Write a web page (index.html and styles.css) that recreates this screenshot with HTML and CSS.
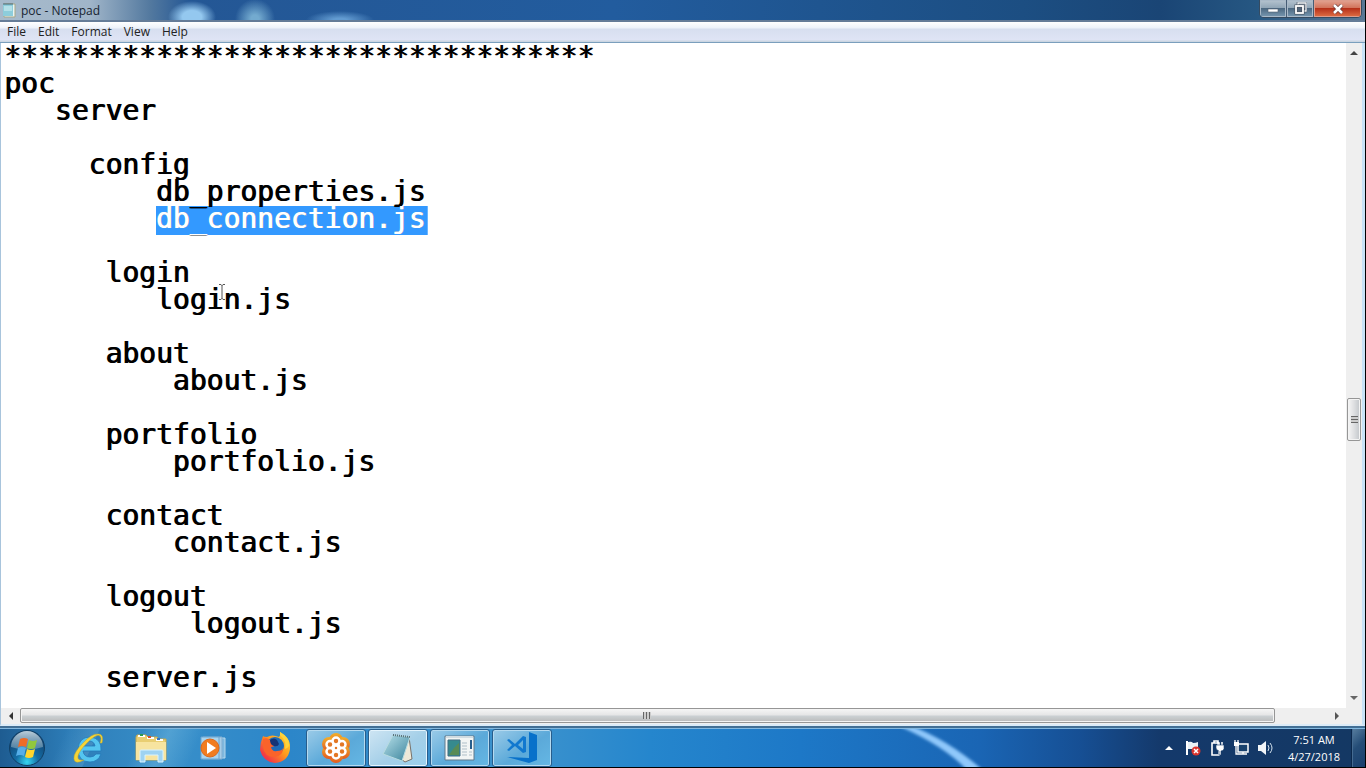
FILE: index.html
```html
<!DOCTYPE html>
<html lang="en">
<head>
<meta charset="utf-8">
<title>poc - Notepad</title>
<link rel="stylesheet" href="styles.css">
</head>
<body>
<div class="desktop">
  <main class="window">
    <header class="titlebar">
      <svg class="app-icon" width="14" height="16" viewBox="0 0 14 16" aria-hidden="true"><path d="M2 2h11v13H2z" fill="#e9f4f2" stroke="#a7a787"/><path d="M1 2h10v12H1z" fill="#8dcddb"/><path d="M2 4h8v5H2z" fill="#b4e0e8"/><path d="M2 1v2M4 1v2M6 1v2M8 1v2M10 1v2" stroke="#4c6670"/></svg>
      <h1 class="title">poc - Notepad</h1>
      <div class="controls">
        <button class="control" aria-label="Minimize"><svg width="12" height="10" viewBox="0 0 12 10"><rect x="1" y="5" width="10" height="3" fill="#fff" stroke="#536273" stroke-width=".6"/></svg></button>
        <button class="control" aria-label="Restore"><svg width="13" height="13" viewBox="0 0 13 13"><path d="M4 3V1h8v8h-2" fill="none" stroke="#4a5563" stroke-width="2.6"/><path d="M4 3V1h8v8h-2" fill="none" stroke="#f4f7fa" stroke-width="1.3"/><rect x="2" y="4" width="7" height="7" fill="#52667c" stroke="#46505d" stroke-width="3"/><rect x="2" y="4" width="7" height="7" fill="none" stroke="#fff" stroke-width="1.8"/></svg></button>
        <button class="control close" aria-label="Close"><svg width="12" height="10" viewBox="0 0 12 10"><path d="M2 1l8 8M10 1L2 9" stroke="#6b3b38" stroke-width="4"/><path d="M2 1l8 8M10 1L2 9" stroke="#fff" stroke-width="2.5"/></svg></button>
      </div>
    </header>
    <nav class="menubar" aria-label="Menu">
      <button class="menu">File</button>
      <button class="menu">Edit</button>
      <button class="menu">Format</button>
      <button class="menu">View</button>
      <button class="menu">Help</button>
    </nav>
    <section class="document">
      <textarea class="editor" id="editor" aria-label="Document text" wrap="off" spellcheck="false">***********************************
poc
   server

     config
         db_properties.js
         db_connection.js

      login
         login.js

      about
          about.js

      portfolio
          portfolio.js

      contact
          contact.js

      logout
           logout.js

      server.js</textarea>
      <div class="scroll vertical">
        <button class="arrow" aria-label="Scroll up"><svg width="8" height="4" viewBox="0 0 8 4"><path d="M0 4L4 0l4 4z" fill="#444"/></svg></button>
        <div class="track"><div class="thumb"><i class="grip"></i></div></div>
        <button class="arrow" aria-label="Scroll down"><svg width="8" height="4" viewBox="0 0 8 4"><path d="M0 0h8L4 4z" fill="#666"/></svg></button>
      </div>
      <div class="scroll horizontal">
        <button class="arrow" aria-label="Scroll left"><svg width="4" height="8" viewBox="0 0 4 8"><path d="M4 0v8L0 4z" fill="#333"/></svg></button>
        <div class="track"><div class="thumb"><i class="grip"></i></div></div>
        <button class="arrow" aria-label="Scroll right"><svg width="4" height="8" viewBox="0 0 4 8"><path d="M0 0v8l4-4z" fill="#555"/></svg></button>
      </div>
      <div class="corner"></div>
    </section>
    <svg class="pointer" width="8" height="18" viewBox="0 0 8 18" aria-hidden="true"><path d="M1 1.500h2l1 1 1-1h2M4 2v14M1 16.500h2l1-1 1 1h2" fill="none" stroke="#555"/></svg>
  </main>
  <footer class="taskbar">
    <svg class="streak" width="160" height="39" viewBox="0 0 160 39" preserveAspectRatio="none" aria-hidden="true"><defs><filter id="soft" x="-20%" y="-20%" width="140%" height="140%"><feGaussianBlur stdDeviation="1.500"/></filter></defs><path d="M8-4Q48 11 84 43H68Q45 18 0-2z" fill="#8fc8fb" filter="url(#soft)"/></svg>
    <div class="launchers">
      <button class="launcher start" aria-label="Start"><svg width="38" height="38" viewBox="0 0 38 38"><defs><radialGradient id="orb" cx=".5" cy=".9" r=".8"><stop offset="0" stop-color="#36d7f2"/><stop offset=".4" stop-color="#146da5"/><stop offset="1" stop-color="#12406d"/></radialGradient><linearGradient id="shine" x2="0" y2="1"><stop offset="0" stop-color="#d9e7ee" stop-opacity=".85"/><stop offset="1" stop-color="#86a9bd" stop-opacity=".5"/></linearGradient></defs><circle cx="19" cy="19" r="17.500" fill="url(#orb)" stroke="#103f65"/><path d="M3 18a16 16 0 0 1 32 0q-16 5-32 0z" fill="url(#shine)"/><path d="M12 10q4-2 8 0l-2 8q-4-2-8 0z" fill="#ee6b27"/><path d="M21 11q4 2 8 0l-2 8q-4 2-8 0z" fill="#91c83d"/><path d="M10 19q4-2 8 0l-2 8q-4-2-8 0z" fill="#55aee8"/><path d="M19 20q4 2 8 0l-2 8q-4 2-8 0z" fill="#ffd52d"/></svg></button>
      <button class="launcher" aria-label="Internet Explorer"><svg width="34" height="34" viewBox="0 0 34 34"><path d="M29 20H11q1 6 7 6 4 0 6-3h5q-3 8-11 8Q6 31 6 18 7 6 18 6q12 1 11 14zM11 15h12q-1-5-6-5-5 0-6 5z" fill="#54c5f0" stroke="#2479b9" stroke-width=".8"/><path d="M30 12Q32 4 27 3 20 2 11 12 1 22 2 28q1 6 10 1-7 1-6-4 1-5 9-13Q25 2 28 5q2 2 0 7z" fill="#f6d435" stroke="#b9a732" stroke-width=".5"/></svg></button>
      <button class="launcher" aria-label="Windows Explorer"><svg width="34" height="32" viewBox="0 0 34 32"><path d="M2 5l1-2h9l2 2h9l2 2h7v21H2z" fill="#e9ce72" stroke="#bfa653"/><path d="M4 4h7M13 6h7M22 8h7" stroke="#fff" stroke-width="2"/><path d="M6 3h3" stroke="#2b9b51" stroke-width="2"/><path d="M14 5h3" stroke="#d5512b" stroke-width="2"/><path d="M23 7h3" stroke="#3876c4" stroke-width="2"/><path d="M2 10h30v18H2z" fill="#f7e4a0"/><path d="M6 30V19q0-1 1-1h21q1 0 1 1v11h-5v-7H11v7z" fill="#9fd3f2" stroke="#d9f3ff"/></svg></button>
      <button class="launcher" aria-label="Windows Media Player"><svg width="28" height="28" viewBox="0 0 28 28"><path d="M7 4h19v20H7z" fill="#7eb8df" stroke="#b5d8ed"/><path d="M4 3h19v22H4z" fill="#a7cde7" stroke="#80add1"/><path d="M2 3h18v22H2z" fill="#a9d4ef" stroke="#6ba5d1"/><circle cx="11" cy="14" r="9" fill="#f17c20" stroke="#dc691d"/><path d="M8 8l9 6-9 6z" fill="#fff"/></svg></button>
      <button class="launcher" aria-label="Firefox"><svg width="34" height="34" viewBox="0 0 34 34"><defs><linearGradient id="fox" x1="1" y1="0" x2="0" y2="1"><stop offset="0" stop-color="#ffe633"/><stop offset=".45" stop-color="#ff981f"/><stop offset=".8" stop-color="#f33c43"/><stop offset="1" stop-color="#d82377"/></linearGradient></defs><path d="M5 5q-3 7-3 14 3 12 15 13 13-1 15-14 1-8-5-13-2-2-5-4 1 3-1 5-7-3-12 0-3 0-4-1z" fill="url(#fox)"/><circle cx="17" cy="15" r="9" fill="#1e6bb8"/><path d="M5 8q4-2 7 1l5 4q0 3-4 3 1 5 6 4 5 0 6-3 0 8-8 9-11 0-12-10z" fill="#fa632a"/><path d="M22 4q7 6 5 14 5-2 4-5 0-7-9-12z" fill="#ffd33b"/><path d="M12 9q4-3 7 0l2 4q-1 3-5 2-4-1-4-6z" fill="#153477"/></svg></button>
      <button class="task" aria-label="GoToMeeting"><svg width="34" height="34" viewBox="0 0 34 34"><defs><linearGradient id="flower" x2="0" y2="1"><stop offset="0" stop-color="#f2b02a"/><stop offset="1" stop-color="#e35a21"/></linearGradient></defs><g fill="url(#flower)"><circle cx="17" cy="9" r="7"/><circle cx="24" cy="13" r="7"/><circle cx="24" cy="21" r="7"/><circle cx="17" cy="25" r="7"/><circle cx="10" cy="21" r="7"/><circle cx="10" cy="13" r="7"/></g><g fill="#e37724" stroke="#fff" stroke-width="2.500"><circle cx="17" cy="10" r="3.500"/><circle cx="23" cy="13.500" r="3.500"/><circle cx="23" cy="20.500" r="3.500"/><circle cx="17" cy="24" r="3.500"/><circle cx="11" cy="20.500" r="3.500"/><circle cx="11" cy="13.500" r="3.500"/><circle cx="17" cy="17" r="2.500"/></g></svg></button>
      <button class="task active" aria-label="Notepad"><svg width="34" height="32" viewBox="0 0 34 32"><defs><linearGradient id="pad" x2="1" y2="1"><stop offset="0" stop-color="#b9e1ea"/><stop offset="1" stop-color="#38829b"/></linearGradient></defs><path d="M28 5l3 22-7 3-4-3z" fill="#eee9d8" stroke="#77716a"/><path d="M12 3l17 2-8 24-19-7z" fill="url(#pad)" stroke="#b7dbe0"/><path d="M12 3l17 2" stroke="#576e77" stroke-width="2" stroke-dasharray="1 1"/></svg></button>
      <button class="task" aria-label="Application window"><svg width="32" height="28" viewBox="0 0 32 28"><path d="M1 2h29v24H1z" fill="#f2f5f4" stroke="#61788a"/><path d="M2 3h27" stroke="#d1dce1" stroke-width="2"/><path d="M4 6h12v16H4z" fill="#368a8e" stroke="#416c83"/><path d="M5 21q6-9 10-12v12z" fill="#588b55"/><path d="M18 9h5M18 12h5M18 15h5M18 18h5M18 21h5M25 18h3M25 21h3" stroke="#afbfc8"/><path d="M26 6h2v9h-2z" fill="#275d8c"/></svg></button>
      <button class="task" aria-label="Visual Studio Code"><svg width="34" height="34" viewBox="0 0 34 34"><path d="M24 1l8 3v25l-8 3-22-6 22 1z" fill="#0871ca"/><path d="M2 9l2-1 6 5 8-8 3 1v15l-3 1-8-7-6 5-2-1 5-5zM18 9l-5 5 5 4z" fill="#1178cf" fill-rule="evenodd"/></svg></button>
    </div>
    <div class="tray">
      <button class="tray-item" aria-label="Show hidden icons"><svg width="8" height="4" viewBox="0 0 8 4"><path d="M0 4l4-4 4 4z" fill="#fff"/></svg></button>
      <button class="tray-item" aria-label="Action Center"><svg width="16" height="16" viewBox="0 0 16 16"><path d="M2 1v14" stroke="#fff" stroke-width="2"/><path d="M3 2q4-1 5 1 3 0 5-1v7q-3 2-6 0H3z" fill="#e9f1f6"/><circle cx="11" cy="11" r="4.500" fill="#da352e"/><path d="M9 9l4 4M13 9l-4 4" stroke="#fff" stroke-width="1.500"/></svg></button>
      <button class="tray-item" aria-label="Power"><svg width="16" height="16" viewBox="0 0 16 16"><path d="M3 3h7v12H3zM5 1h4v2H5z" fill="none" stroke="#fff" stroke-width="1.600"/><path d="M9 2v4M13 2v4" stroke="#fff" stroke-width="1.500"/><path d="M7 5h8v4q-1 2-3 2v4h-2v-4q-3-1-3-3z" fill="#fff" stroke="#173e6b" stroke-width=".6"/></svg></button>
      <button class="tray-item" aria-label="Network"><svg width="16" height="16" viewBox="0 0 16 16"><path d="M5 4h10v8H5z" fill="#18416d" stroke="#fff" stroke-width="1.500"/><path d="M1 2h5v4H1z" fill="#fff"/><path d="M2 0v3M5 0v3M3 6v8h11M10 12v2" stroke="#fff" fill="none" stroke-width="1.300"/></svg></button>
      <button class="tray-item" aria-label="Volume"><svg width="16" height="16" viewBox="0 0 16 16"><path d="M1 5h3l5-4v14l-5-4H1z" fill="#f1f5f8"/><path d="M11 5q2 3 0 6M13 3q4 5 0 10" fill="none" stroke="#d6e4ee"/></svg></button>
      <time class="clock" datetime="2018-04-27T07:51"><span>7:51 AM</span><span>4/27/2018</span></time>
      <button class="show-desktop" aria-label="Show desktop"></button>
    </div>
  </footer>
</div>
<script src="script.js"></script>
</body>
</html>
```
FILE: styles.css
```css
* { box-sizing: border-box; }
body { margin: 0; background: #000; font-family: "Open Sans", "Noto Sans", sans-serif; font-size: 12px; }
button { margin: 0; padding: 0; border: 0; background: none; color: inherit; font: inherit; }
svg { display: block; flex: none; }
.desktop { display: flex; flex-direction: column; height: 100vh; padding: 0 1px 1px 0; overflow: hidden; }
.window { position: relative; display: flex; flex: 1; flex-direction: column; min-height: 0; border-bottom: 2px solid #426f95; }
.titlebar {
  display: flex; align-items: center; height: 22px; padding-left: 2px;
  border-bottom: 2px solid #657c98;
  background:
    radial-gradient(ellipse 24px 16px at 192px 17px, #94c8ef 40%, transparent),
    radial-gradient(ellipse 20px 20px at 255px 19px, #73aacf 20%, transparent),
    radial-gradient(ellipse 34px 9px at 340px 20px, #629bd1 20%, transparent),
    linear-gradient(90deg, #a7bacb 0, #a0b5c9 90px, #53799f 150px, #245795 190px, #225c9e 45%, #1c4e82 75%, #1a4575 85%, #265782 92%, #5a7895);
}
.app-icon { margin-right: 5px; }
.title { flex: 1; margin: 0; padding-top: 2px; color: #172431; font-size: 12px; font-weight: 400; line-height: 20px; }
.controls { display: flex; align-self: flex-start; margin-right: 3px; overflow: hidden; border: 1px solid #354b61; border-top: 0; border-radius: 0 0 5px 5px; }
.control { display: flex; align-items: center; justify-content: center; width: 27px; height: 17px; border-right: 1px solid #465d75; background: linear-gradient(#b6c4d0, #91a6b7 45%, #4c6881 50%, #7999b2); box-shadow: inset 0 0 0 1px #a9b9c8; }
.control.close { width: 47px; border: 0; background: linear-gradient(#e3a594, #d2745d 45%, #b6311a 50%, #df7045); box-shadow: inset 0 0 0 1px #dc9c8c; }
.menubar { display: flex; height: 21px; padding-left: 1px; border-bottom: 1px solid #7a9fbd; background: linear-gradient(#fff, #edf2fa 6px, #d7dff0 7px, #dfe4f5 18px, #cbd6e2 19px); }
.menu { padding: 0 6px; color: #222; line-height: 20px; }
.document { display: grid; flex: 1; grid-template-columns: 1fr 16px; grid-template-rows: 1fr 16px; min-height: 0; border-right: 3px solid #c8e3f7; border-left: 1px solid #a8c4dc; border-bottom: 2px solid #dcebf7; background: #fff; }
.editor {
  width: 100%; height: 100%; margin: 0; padding: 0 3px; overflow: hidden; resize: none;
  border: 0; outline: 0; color: #000;
  font: 28px/27px "DejaVu Sans Mono", monospace; white-space: pre;
  text-shadow: 1px 0 #000;
  /* Highlight behind the selected name: seventh line, tenth column, sixteen characters. */
  background: linear-gradient(#3399ff, #3399ff) calc(9ch + 3px) 163px / calc(16ch + 2px) 29px no-repeat local #fff;
}
.editor::selection { background: transparent; color: #fff; text-shadow: 1px 0 #fff; }
.scroll { display: flex; background: #efefef; }
.vertical { flex-direction: column; }
.track { display: flex; flex: 1; }
.vertical .track { flex-direction: column; }
.arrow { display: flex; align-items: center; justify-content: center; }
.vertical .arrow { height: 20px; }
.horizontal .arrow { width: 19px; }
.thumb { display: flex; align-items: center; justify-content: center; border: 1px solid #969696; border-radius: 2px; box-shadow: inset 0 0 0 1px #f4f4f4; }
.vertical .thumb { height: 7%; margin: 0 1px; background: linear-gradient(90deg, #f6f6f6, #dedfe1 50%, #c2c6ca); }
.vertical .track::before { content: ""; flex: 331; }
.vertical .track::after { content: ""; flex: 244; }
.horizontal .thumb { width: 96%; height: 15px; background: linear-gradient(#f5f5f5, #e6e6e7 45%, #cbd0d3 55%, #bababa); }
.grip { width: 8px; height: 7px; }
.vertical .grip { background: repeating-linear-gradient(#666 0 1px, #ccc 1px 3px); width: 7px; }
.horizontal .grip { background: repeating-linear-gradient(90deg, #666 0 1px, #ccc 1px 3px); }
.corner { background: #efefef; }
.pointer { position: absolute; left: 218px; top: 283px; pointer-events: none; }
.taskbar {
  position: relative; display: flex; justify-content: space-between; height: 39px; overflow: hidden;
  border-top: 1px solid #83b8df; color: #fff;
  background: linear-gradient(115deg, transparent 60px, #65a4ce60 90px, transparent 91px, transparent 130px, #72b8df70 155px, transparent 185px), linear-gradient(90deg, #1e5c91, #2d7db8 70px, #388fc9 170px, #2c86c9 290px, #3d93cd 520px, #2586cd 650px, #1d78c7 800px, #1a65b4 980px, #164f94 1080px, #14396b 1160px, #143863);
}
.streak { position: absolute; left: 66%; top: 0; }
.launchers, .tray { position: relative; display: flex; align-items: center; }
.launchers { padding-left: 8px; }
.launcher { display: flex; align-items: center; justify-content: center; width: 62px; height: 38px; }
.start { justify-content: flex-start; width: 50px; }
.task { display: flex; align-items: center; justify-content: center; width: 60px; height: 38px; margin-right: 2px; border: 1px solid #275d8c; border-radius: 3px; background: linear-gradient(145deg, #9bcbe8, #5ba9d9 55%, #65b7e4); box-shadow: inset 0 0 0 1px #b5daf0; }
.task.active { background: linear-gradient(145deg, #cee5f3, #a4cfe8 55%, #9ad0ed); box-shadow: inset 0 0 0 1px #e4f4fd; }
.tray-item { display: flex; align-items: center; justify-content: center; width: 24px; height: 38px; }
.clock { display: flex; flex-direction: column; width: 74px; font-size: 11px; line-height: 17px; text-align: center; }
.show-desktop { width: 14px; height: 38px; border-left: 1px solid #0b284c; background: linear-gradient(135deg, #587e9f, #254d77 45%, #193f6d); box-shadow: inset 1px 0 #456b91; }
```
FILE: script.js
```js
const editor = document.getElementById("editor");
const selected = "db_connection.js";
const start = editor.value.indexOf(selected);
editor.focus({ preventScroll: true });
editor.setSelectionRange(start, start + selected.length);
editor.scrollTop = 0;
```
